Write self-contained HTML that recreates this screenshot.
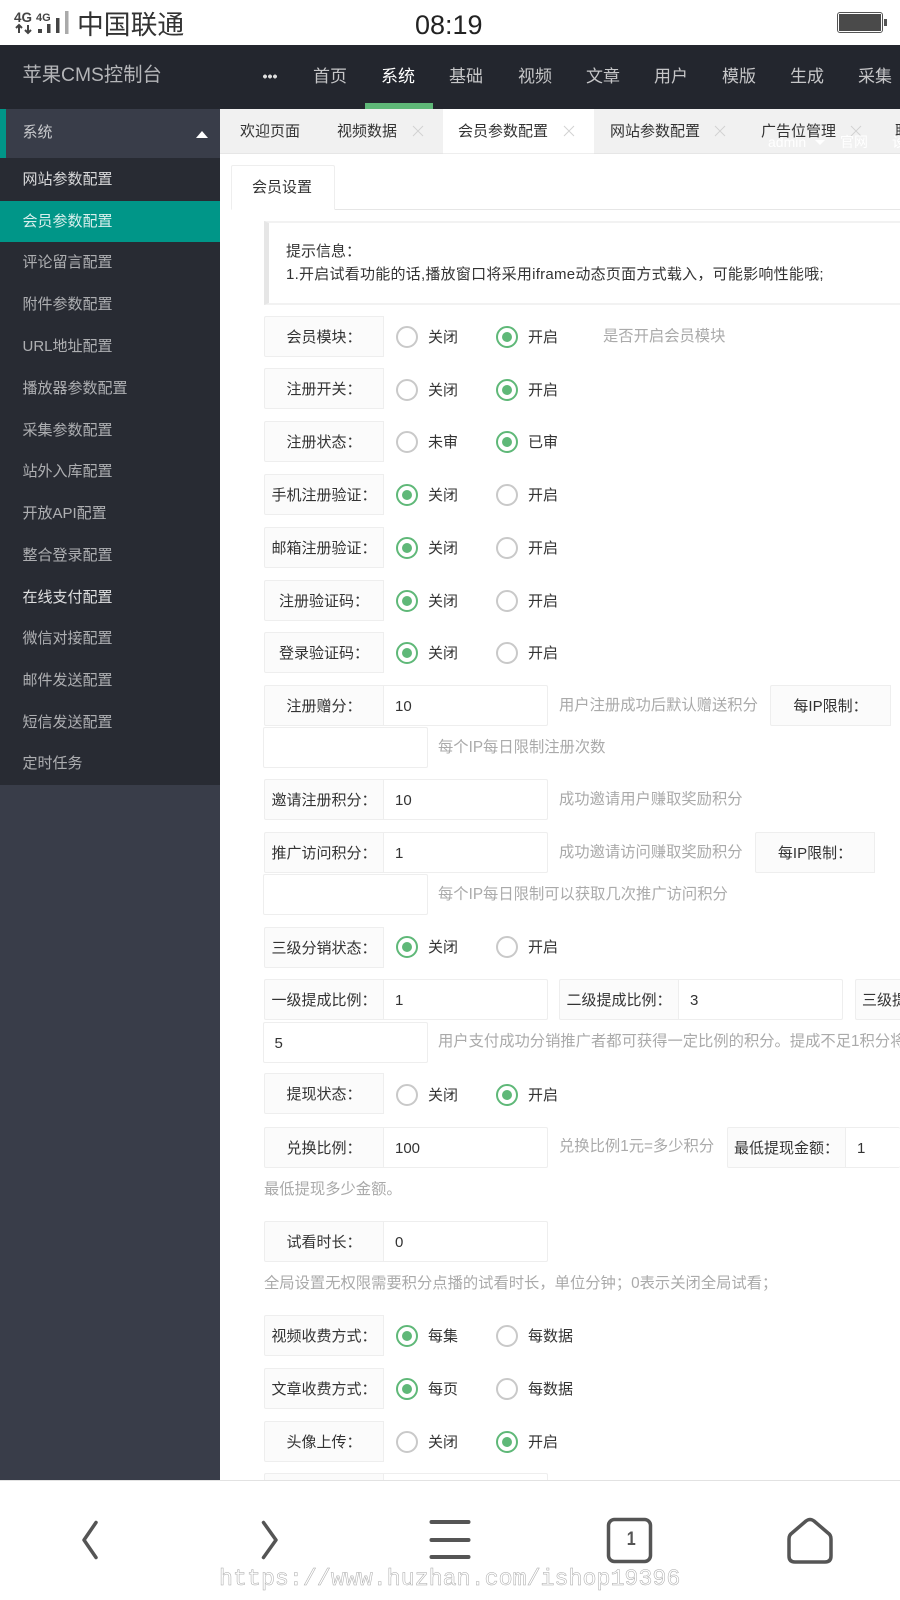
<!DOCTYPE html>
<html lang="zh"><head><meta charset="utf-8"><title>苹果CMS控制台</title>
<style>
html,body{margin:0;padding:0;background:#fff;overflow:hidden}
body{position:relative;width:900px;height:1600px;overflow:hidden;font-family:"Liberation Sans","Noto Sans CJK SC",sans-serif;font-size:15px;color:#333}
.a,.t,.l,.i,.h,.r,.n,.s,.tb,.x{position:absolute;box-sizing:border-box}
.t,.h,.n,.s,.tb{white-space:nowrap;line-height:30px;height:30px;margin-top:1px}
.h{color:#aaa;font-size:15.3px}
.l{background:#fbfbfb;border:1px solid #eee;text-align:center;line-height:41px;height:41px;white-space:nowrap;border-radius:2px 0 0 2px;overflow:hidden}
.i{background:#fff;border:1px solid #eee;line-height:41px;height:41px;padding-left:11px;border-radius:0 2px 2px 0;overflow:hidden}
.r{width:22px;height:22px;border:2px solid #c9c9c9;border-radius:50%}
.r.on{border-color:#5fb878}
.r.on::after{content:"";position:absolute;left:4px;top:4px;width:10px;height:10px;border-radius:50%;background:#5fb878}
.n{color:#c6c6c8;font-size:17px;transform:translateX(-50%)}
.s{left:22.5px;color:rgba(255,255,255,.62);font-size:15px}
.tb{font-size:15px;color:#333;top:116px}
.x{top:125px;width:12px;height:12px}
</style></head><body>

<!-- status bar -->
<svg class="a" style="left:0;top:0" width="90" height="45" viewBox="0 0 90 45">
<text x="14" y="22" font-family="Liberation Sans" font-weight="bold" font-size="13.5" fill="#444">4G</text>
<text x="36" y="21" font-family="Liberation Sans" font-weight="bold" font-size="11" fill="#444">4G</text>
<path d="M19 33V25M16 28l3-3 3 3M28 25v8M25 30l3 3 3-3" stroke="#444" stroke-width="2" fill="none"/>
<rect x="38" y="29" width="4" height="4" fill="#444"/><rect x="47" y="24" width="3.5" height="9" fill="#444"/><rect x="56" y="18" width="3.5" height="15" fill="#444"/><rect x="65" y="11" width="3.5" height="23" fill="#aaa"/>
</svg>
<div class="t" style="left:77px;top:9px;font-size:26.8px;color:#333">中国联通</div>
<div class="t" style="left:415px;top:9px;font-size:27px;color:#222">08:19</div>
<div class="a" style="left:837px;top:12px;width:46px;height:21px;border:1.5px solid #555;border-radius:3px;padding:1px"><div style="width:100%;height:100%;background:#4a4a4a"></div></div>
<div class="a" style="left:884px;top:19px;width:3px;height:7px;background:#555"></div>

<!-- header -->
<div class="a" style="left:0;top:45px;width:900px;height:64px;background:#23262e"></div>
<div class="t" style="left:22.5px;top:60px;font-size:19.3px;color:#b4b5b8">苹果CMS控制台</div>
<div class="a" style="left:262.500px;top:74px;width:14px;height:5px;background:radial-gradient(circle at 2px 2.5px,#ddd 1.8px,transparent 2.1px),radial-gradient(circle at 7px 2.5px,#ddd 1.8px,transparent 2.1px),radial-gradient(circle at 12px 2.5px,#ddd 1.8px,transparent 2.1px)"></div>
<div class="n" style="left:330px;top:61px">首页</div>
<div class="n" style="left:398px;top:61px;color:#fff">系统</div>
<div class="n" style="left:466px;top:61px">基础</div>
<div class="n" style="left:535px;top:61px">视频</div>
<div class="n" style="left:603px;top:61px">文章</div>
<div class="n" style="left:671px;top:61px">用户</div>
<div class="n" style="left:739px;top:61px">模版</div>
<div class="n" style="left:807px;top:61px">生成</div>
<div class="n" style="left:875px;top:61px">采集</div>
<div class="a" style="left:365px;top:103px;width:68px;height:6px;background:#5fb878"></div>

<!-- sidebar -->
<div class="a" style="left:0;top:109px;width:219.5px;height:1371px;background:#393d49"></div>
<div class="a" style="left:0;top:158px;width:219.5px;height:627px;background:#282b33"></div>
<div class="a" style="left:0;top:109px;width:6px;height:49px;background:#009688"></div>
<div class="a" style="left:0;top:200.5px;width:219.5px;height:41.5px;background:#009688"></div>
<div class="s" style="top:117px;color:#c8c9cc">系统</div>
<div class="a" style="left:196px;top:131px;width:0;height:0;border:6px solid transparent;border-top:0;border-bottom:7px solid #fff"></div>
<div class="s" style="top:164px;color:rgba(255,255,255,.82)">网站参数配置</div>
<div class="s" style="top:205.5px;color:rgba(255,255,255,.85)">会员参数配置</div>
<div class="s" style="top:247px">评论留言配置</div>
<div class="s" style="top:289px">附件参数配置</div>
<div class="s" style="top:331px">URL地址配置</div>
<div class="s" style="top:372.5px">播放器参数配置</div>
<div class="s" style="top:414.5px">采集参数配置</div>
<div class="s" style="top:456px">站外入库配置</div>
<div class="s" style="top:498px">开放API配置</div>
<div class="s" style="top:540px">整合登录配置</div>
<div class="s" style="top:581.5px;color:rgba(255,255,255,.85)">在线支付配置</div>
<div class="s" style="top:623px">微信对接配置</div>
<div class="s" style="top:665px">邮件发送配置</div>
<div class="s" style="top:706.5px">短信发送配置</div>
<div class="s" style="top:748px">定时任务</div>

<!-- tabs -->
<div class="a" style="left:219.5px;top:109px;width:680.5px;height:45px;background:#f1f1f1;border-bottom:1px solid #e6e6e6"></div>
<div class="a" style="left:442.5px;top:109px;width:151.500px;height:45px;background:#fff;border-bottom:1px solid #eee"></div>
<div class="tb" style="left:240px">欢迎页面</div>
<div class="tb" style="left:337px">视频数据</div>
<div class="tb" style="left:458px">会员参数配置</div>
<div class="tb" style="left:610px">网站参数配置</div>
<div class="tb" style="left:761px">广告位管理</div>
<div class="tb" style="left:895px;width:5px;overflow:hidden">联</div>
<svg class="x" style="left:412px" viewBox="0 0 12 12"><path d="M1 1l10 10M11 1L1 11" stroke="#d2d2d2" stroke-width="1"/></svg>
<svg class="x" style="left:563px" viewBox="0 0 12 12"><path d="M1 1l10 10M11 1L1 11" stroke="#d2d2d2" stroke-width="1"/></svg>
<svg class="x" style="left:714px" viewBox="0 0 12 12"><path d="M1 1l10 10M11 1L1 11" stroke="#d2d2d2" stroke-width="1"/></svg>
<svg class="x" style="left:850px" viewBox="0 0 12 12"><path d="M1 1l10 10M11 1L1 11" stroke="#d2d2d2" stroke-width="1"/></svg>
<div class="t" style="left:768px;top:126px;color:#fff;font-size:14px">admin</div>
<div class="a" style="left:815px;top:140px;width:0;height:0;border:5px solid transparent;border-bottom:0;border-top:5px solid #fff"></div>
<div class="t" style="left:840px;top:126px;color:#fff;font-size:14px">官网</div>
<div class="t" style="left:892px;top:126px;width:8px;overflow:hidden;color:#fff;font-size:14px">设</div>

<!-- sub tab -->
<div class="a" style="left:231px;top:209px;width:669px;height:1px;background:#e6e6e6"></div>
<div class="a" style="left:231px;top:165px;width:104px;height:45px;background:#fff;border:1px solid #eee;border-bottom:1px solid #fff;border-radius:2px 2px 0 0"></div>
<div class="t" style="left:252px;top:172px">会员设置</div>

<!-- tip -->
<div class="a" style="left:264px;top:221px;width:636px;height:84px;border:2px solid #f2f2f2;border-left:5px solid #e6e6e6;border-right:0"></div>
<div class="t" style="left:286px;top:236px">提示信息：</div>
<div class="t" style="left:286px;top:259px;letter-spacing:.25px">1.开启试看功能的话,播放窗口将采用iframe动态页面方式载入，可能影响性能哦;</div>

<!-- radio rows -->
<div class="l" style="left:264px;top:316px;width:120px">会员模块：</div>
<div class="r" style="left:395.5px;top:326px"></div><div class="t" style="left:428px;top:322px">关闭</div>
<div class="r on" style="left:496px;top:326px"></div><div class="t" style="left:528px;top:322px">开启</div>
<div class="h" style="left:603px;top:321px">是否开启会员模块</div>

<div class="l" style="left:264px;top:368px;width:120px">注册开关：</div>
<div class="r" style="left:395.5px;top:379px"></div><div class="t" style="left:428px;top:375px">关闭</div>
<div class="r on" style="left:496px;top:379px"></div><div class="t" style="left:528px;top:375px">开启</div>

<div class="l" style="left:264px;top:421px;width:120px">注册状态：</div>
<div class="r" style="left:395.5px;top:431px"></div><div class="t" style="left:428px;top:427px">未审</div>
<div class="r on" style="left:496px;top:431px"></div><div class="t" style="left:528px;top:427px">已审</div>

<div class="l" style="left:264px;top:474px;width:120px">手机注册验证：</div>
<div class="r on" style="left:395.5px;top:484px"></div><div class="t" style="left:428px;top:480px">关闭</div>
<div class="r" style="left:496px;top:484px"></div><div class="t" style="left:528px;top:480px">开启</div>

<div class="l" style="left:264px;top:527px;width:120px">邮箱注册验证：</div>
<div class="r on" style="left:395.5px;top:537px"></div><div class="t" style="left:428px;top:533px">关闭</div>
<div class="r" style="left:496px;top:537px"></div><div class="t" style="left:528px;top:533px">开启</div>

<div class="l" style="left:264px;top:580px;width:120px">注册验证码：</div>
<div class="r on" style="left:395.5px;top:590px"></div><div class="t" style="left:428px;top:586px">关闭</div>
<div class="r" style="left:496px;top:590px"></div><div class="t" style="left:528px;top:586px">开启</div>

<div class="l" style="left:264px;top:632px;width:120px">登录验证码：</div>
<div class="r on" style="left:395.5px;top:642px"></div><div class="t" style="left:428px;top:638px">关闭</div>
<div class="r" style="left:496px;top:642px"></div><div class="t" style="left:528px;top:638px">开启</div>

<!-- input rows -->
<div class="l" style="left:264px;top:685px;width:120px">注册赠分：</div>
<div class="i" style="left:383px;top:685px;width:165px">10</div>
<div class="h" style="left:559px;top:690px">用户注册成功后默认赠送积分</div>
<div class="l" style="left:770px;top:685px;width:121px">每IP限制：</div>
<div class="i" style="left:262.5px;top:727px;width:165px;border-radius:2px"></div>
<div class="h" style="left:438px;top:732px">每个IP每日限制注册次数</div>

<div class="l" style="left:264px;top:779px;width:120px">邀请注册积分：</div>
<div class="i" style="left:383px;top:779px;width:165px">10</div>
<div class="h" style="left:559px;top:784px">成功邀请用户赚取奖励积分</div>

<div class="l" style="left:264px;top:832px;width:120px">推广访问积分：</div>
<div class="i" style="left:383px;top:832px;width:165px">1</div>
<div class="h" style="left:559px;top:837px">成功邀请访问赚取奖励积分</div>
<div class="l" style="left:755px;top:832px;width:120px">每IP限制：</div>
<div class="i" style="left:262.5px;top:874px;width:165px;border-radius:2px"></div>
<div class="h" style="left:438px;top:879px">每个IP每日限制可以获取几次推广访问积分</div>

<div class="l" style="left:264px;top:927px;width:120px">三级分销状态：</div>
<div class="r on" style="left:395.5px;top:936px"></div><div class="t" style="left:428px;top:932px">关闭</div>
<div class="r" style="left:496px;top:936px"></div><div class="t" style="left:528px;top:932px">开启</div>

<div class="l" style="left:264px;top:979px;width:120px">一级提成比例：</div>
<div class="i" style="left:383px;top:979px;width:165px">1</div>
<div class="l" style="left:559px;top:979px;width:120px">二级提成比例：</div>
<div class="i" style="left:678px;top:979px;width:165px">3</div>
<div class="l" style="left:855px;top:979px;width:45px;text-align:left;padding-left:6px;border-right:0">三级提成比例：</div>
<div class="i" style="left:262.5px;top:1021.5px;width:165px;border-radius:2px">5</div>
<div class="h" style="left:438px;top:1026px;width:462px;overflow:hidden">用户支付成功分销推广者都可获得一定比例的积分。提成不足1积分将不发放</div>

<div class="l" style="left:264px;top:1073px;width:120px">提现状态：</div>
<div class="r" style="left:395.5px;top:1084px"></div><div class="t" style="left:428px;top:1080px">关闭</div>
<div class="r on" style="left:496px;top:1084px"></div><div class="t" style="left:528px;top:1080px">开启</div>

<div class="l" style="left:264px;top:1126.5px;width:120px">兑换比例：</div>
<div class="i" style="left:383px;top:1126.5px;width:165px">100</div>
<div class="h" style="left:559px;top:1131px">兑换比例1元=多少积分</div>
<div class="l" style="left:726.5px;top:1126.5px;width:120px">最低提现金额：</div>
<div class="i" style="left:845px;top:1126.5px;width:55px;border-right:0">1</div>
<div class="h" style="left:264px;top:1174px">最低提现多少金额。</div>

<div class="l" style="left:264px;top:1221px;width:120px">试看时长：</div>
<div class="i" style="left:383px;top:1221px;width:165px">0</div>
<div class="h" style="left:264px;top:1268px">全局设置无权限需要积分点播的试看时长，单位分钟；0表示关闭全局试看；</div>

<div class="l" style="left:264px;top:1315px;width:120px">视频收费方式：</div>
<div class="r on" style="left:395.5px;top:1325px"></div><div class="t" style="left:428px;top:1321px">每集</div>
<div class="r" style="left:496px;top:1325px"></div><div class="t" style="left:528px;top:1321px">每数据</div>

<div class="l" style="left:264px;top:1368px;width:120px">文章收费方式：</div>
<div class="r on" style="left:395.5px;top:1378px"></div><div class="t" style="left:428px;top:1374px">每页</div>
<div class="r" style="left:496px;top:1378px"></div><div class="t" style="left:528px;top:1374px">每数据</div>

<div class="l" style="left:264px;top:1421px;width:120px">头像上传：</div>
<div class="r" style="left:395.5px;top:1431px"></div><div class="t" style="left:428px;top:1427px">关闭</div>
<div class="r on" style="left:496px;top:1431px"></div><div class="t" style="left:528px;top:1427px">开启</div>

<div class="l" style="left:264px;top:1473px;width:120px"></div>
<div class="i" style="left:383px;top:1473px;width:165px"></div>

<!-- bottom bar -->
<div class="a" style="left:0;top:1480px;width:900px;height:120px;background:#fff;border-top:1px solid #e2e2e2"></div>
<svg class="a" style="left:0;top:1480px" width="900" height="120" viewBox="0 0 900 120" fill="none" stroke="#555" stroke-linecap="round" stroke-linejoin="round">
<path d="M96 42.500 L84 60 L96 77.500" stroke-width="3.500"/>
<path d="M263.500 42.500 L276 60 L263.500 77.500" stroke-width="3.500"/>
<path d="M431.500 42H468.500M431.500 60H468.500M431.500 77H468.500" stroke-width="4"/>
<rect x="608.500" y="39.500" width="42" height="42" rx="6" stroke-width="3.500"/>
<path d="M789 59 Q789 55 792 53 L806 41 Q810 38 814 41 L828 53 Q831 55 831 59 V76 Q831 82 825 82 H795 Q789 82 789 76 Z" stroke-width="3.500"/>
</svg>
<div class="t" style="left:625.500px;top:1524px;font-size:19px;font-weight:bold;color:#555;transform:scaleX(.85)">1</div>
<div class="t" style="left:219px;top:1563px;font-family:'Liberation Mono',monospace;font-size:23.3px;color:#fff;-webkit-text-stroke:.5px #a8a8a8">https://www.huzhan.com/ishop19396</div>
</body></html>
